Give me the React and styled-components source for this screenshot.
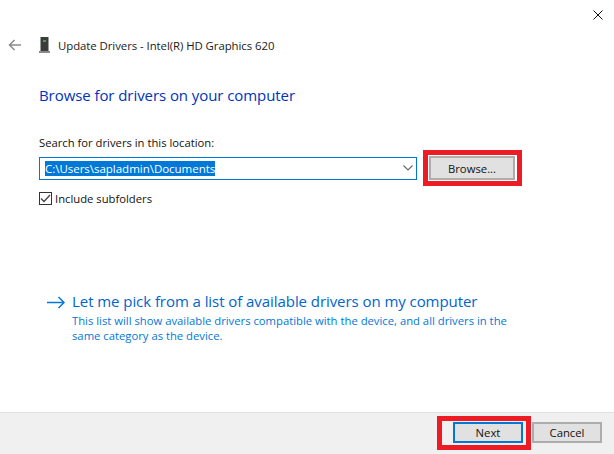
import React from "react";
import styled, { createGlobalStyle } from "styled-components";

const Global = createGlobalStyle`
  html, body { margin: 0; padding: 0; background: #fff; }
  body { font-family: "Open Sans", "Noto Sans", "Liberation Sans", sans-serif; }
`;

const Dialog = styled.div`
  width: 614px; height: 454px; display: flex; flex-direction: column; background: #fff; overflow: hidden;
`;
const CloseRow = styled.div`
  height: 29px; display: flex; justify-content: flex-end; align-items: flex-start;
  padding: 10px 11px 0 0; box-sizing: border-box;
`;
const Header = styled.div`
  display: flex; align-items: center; height: 20px; margin-top: 6px; padding-left: 8px;
`;
const BackIcon = styled.svg`
  width: 14px; height: 14px; margin-right: 17px; display: block;
`;
const DeviceIcon = styled.svg`
  width: 11px; height: 16px; margin-right: 8px; display: block;
`;
const HeaderTitle = styled.div`
  font-size: 11.4px; color: #1a1a1a; white-space: nowrap; letter-spacing: -0.06px;
`;
const Body = styled.div`
  flex: 1; padding: 0 0 0 39px; display: flex; flex-direction: column;
`;
const Heading = styled.div`
  margin-top: 30px; height: 20px; line-height: 20px; font-size: 15px; color: #0033bc; white-space: nowrap; letter-spacing: -0.07px;
`;
const FieldLabel = styled.div`
  margin-top: 29px; height: 18px; line-height: 18px; font-size: 11.25px; color: #111; white-space: nowrap;
`;
const FieldRow = styled.div`
  display: flex; align-items: center; margin-top: 4px; height: 24px;
`;
const Combo = styled.div`
  width: 378px; height: 23px; box-sizing: border-box; border: 1px solid #0078d7; display: flex;
  align-items: center; justify-content: space-between; padding: 0 3px 0 5px; background: #fff;
`;
const Selected = styled.span`
  background: #0078d7; color: #fff; font-size: 11.5px; line-height: 15px; height: 15px; white-space: nowrap; letter-spacing: -0.02px;
`;
const Chevron = styled.svg`
  width: 10px; height: 6px; display: block;
`;
const Highlight = styled.div`
  position: relative; margin-left: ${(p) => p.$ml || 0}px; display: flex;
  &::after {
    content: ""; position: absolute; pointer-events: none; border: 5px solid #ed1c24; box-sizing: border-box;
    left: ${(p) => p.$l}px; right: ${(p) => p.$r}px; top: ${(p) => p.$t}px; bottom: ${(p) => p.$b}px;
  }
`;
const Button = styled.button`
  width: ${(p) => p.$w}px; height: ${(p) => p.$h}px; margin-left: ${(p) => p.$ml || 0}px; padding: 0 0 ${(p) => (p.$low ? 0 : 1)}px; box-sizing: border-box; background: #e1e1e1;
  border: ${(p) => (p.$primary ? "2px solid #0078d7" : "2px solid #adadad")};
  font-family: inherit; font-size: 11.3px; color: #111; display: flex; align-items: center; justify-content: center;
`;
const CheckRow = styled.label`
  display: flex; align-items: center; margin-top: 9px; height: 18px; font-size: 11.25px; color: #111; white-space: nowrap;
`;
const CheckBox = styled.span`
  width: 13px; height: 13px; box-sizing: border-box; border: 1px solid #333; display: flex; align-items: center;
  justify-content: center; margin-right: 3px; background: #fff;
`;
const CheckIcon = styled.svg`
  width: 11px; height: 9px; display: block;
`;
const LinkBlock = styled.div`
  margin-top: 84px; display: flex; align-items: flex-start; margin-left: 8px;
`;
const LinkArrow = styled.svg`
  width: 18px; height: 13px; margin: 5px 7px 0 0; display: block; flex: none;
`;
const LinkText = styled.div`
  display: flex; flex-direction: column;
`;
const LinkTitle = styled.div`
  font-size: 15.03px; line-height: 20px; color: #0066cc; white-space: nowrap; letter-spacing: -0.07px;
`;
const LinkDesc = styled.div`
  font-size: 11.27px; line-height: 15px; color: #0078d7; width: 445px; margin-top: 2px;
`;
const Footer = styled.div`
  height: 42px; box-sizing: border-box; background: #f0f0f0; border-top: 1px solid #dfdfdf;
  display: flex; justify-content: flex-end; align-items: flex-start; padding: 9px 12px 0 0;
`;

export default function App() {
  return (
    <Dialog>
      <Global />
      <CloseRow>
        <svg width="10" height="10" viewBox="0 0 10 10" fill="none" stroke="#111" strokeWidth="1">
          <path d="M0.5 0.5 L9.5 9.5 M9.5 0.5 L0.5 9.5" />
        </svg>
      </CloseRow>
      <Header>
        <BackIcon viewBox="0 0 14 14" fill="none" stroke="#8a8a8a" strokeWidth="1.5">
          <path d="M13 7 H1.5 M6.5 2 L1.5 7 L6.5 12" />
        </BackIcon>
        <DeviceIcon viewBox="0 0 11 16">
          <rect x="1.5" y="0" width="8" height="14" fill="#3c3c3c" />
          <rect x="4" y="3" width="3" height="2" fill="#3ea55a" />
          <rect x="0" y="14" width="11" height="2" fill="#8a8a8a" />
        </DeviceIcon>
        <HeaderTitle>Update Drivers - Intel(R) HD Graphics 620</HeaderTitle>
      </Header>
      <Body>
        <Heading>Browse for drivers on your computer</Heading>
        <FieldLabel>Search for drivers in this location:</FieldLabel>
        <FieldRow>
          <Combo>
            <Selected>C:\Users\sapladmin\Documents</Selected>
            <Chevron viewBox="0 0 10 6" fill="none" stroke="#666" strokeWidth="1.1">
              <path d="M0.5 0.5 L5 5 L9.5 0.5" />
            </Chevron>
          </Combo>
          <Highlight $ml={12} $l={-6} $r={-7} $t={-6} $b={-6}>
            <Button $low $w={86} $h={24}>Browse...</Button>
          </Highlight>
        </FieldRow>
        <CheckRow>
          <CheckBox>
            <CheckIcon viewBox="0 0 11 9" fill="none" stroke="#444" strokeWidth="1.3">
              <path d="M1 4.5 L4 7.5 L10 1" />
            </CheckIcon>
          </CheckBox>
          Include subfolders
        </CheckRow>
        <LinkBlock>
          <LinkArrow viewBox="0 0 18 13" fill="none" stroke="#0078d7" strokeWidth="1.5">
            <path d="M0 6.5 H17 M11.5 1 L17 6.5 L11.5 12" />
          </LinkArrow>
          <LinkText>
            <LinkTitle>Let me pick from a list of available drivers on my computer</LinkTitle>
            <LinkDesc>This list will show available drivers compatible with the device, and all drivers in the same category as the device.</LinkDesc>
          </LinkText>
        </LinkBlock>
      </Body>
      <Footer>
        <Highlight $l={-16} $r={-8} $t={-6} $b={-7}>
          <Button $low $primary $w={70} $h={21}>Next</Button>
        </Highlight>
        <Button $low $ml={9} $w={70} $h={21}>Cancel</Button>
      </Footer>
    </Dialog>
  );
}
